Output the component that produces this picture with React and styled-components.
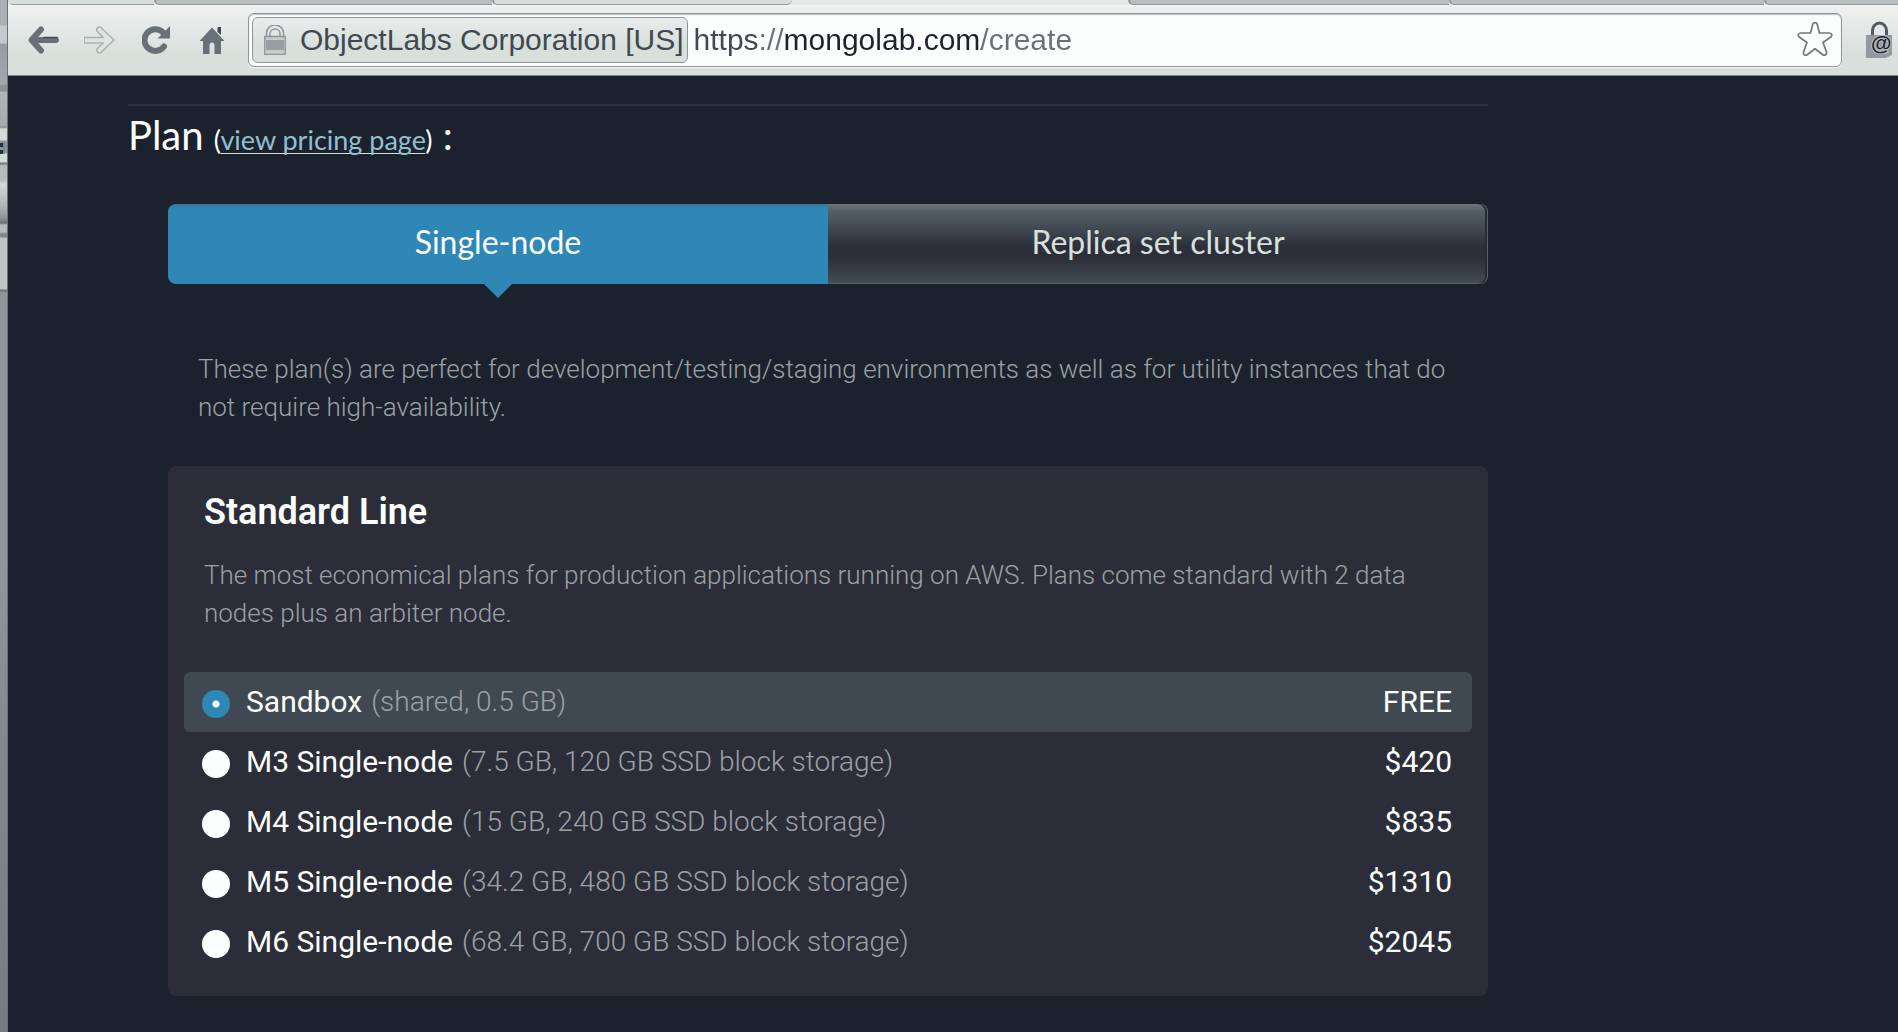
import React, { useState } from "react";
import styled, { createGlobalStyle, css } from "styled-components";

const c = {
  page: "#1b222d",
  card: "#2b2e39",
  selected: "#404951",
  blue: "#2f87b5",
  white: "#fbfefd",
  pale: "#d8e0dc",
  muted: "#9ba1a5",
  icon: "#687178",
  ink: "#404951",
};

const GlobalStyle = createGlobalStyle`
  *, *::before, *::after { box-sizing: border-box; }
  html, body { margin: 0; background: ${c.page}; }
  button, input { font: inherit; color: inherit; margin: 0; }
  h2, h3, p { margin: 0; }
`;

const Desktop = styled.div`
  display: flex;
  min-height: 100vh;
  overflow: hidden;
  font-family: Roboto, "Liberation Sans", sans-serif;
`;

const WindowBehind = styled.div`
  flex: 0 0 8px;
  border-right: 1px solid #687178;
  background: linear-gradient(
    #a9b0b2 0, #a9b0b2 25px, #c3cbc9 26px, #c3cbc9 43px,
    #969da2 44px, #a2a9ac 84px, #8a9196 86px, #8a9196 91px,
    #afb6b7 92px, #a5acaf 126px, #7f878c 127px, #d3dbd7 129px,
    #d3dbd7 140px, #8f979d 141px, #8f979d 153px, #d3dbd7 154px,
    #d3dbd7 162px, #687178 163px, #b5bdbc 166px, #b5bdbc 180px,
    #d0d8d4 184px, #b0b7b8 205px, #8f979d 218px, #687178 223px,
    #b5bdbc 225px, #b5bdbc 232px, #7f878c 234px, #7f878c 237px,
    #bdc5c3 238px, #bdc5c3 289px, #687178 290px, #8f979d 293px,
    #8f979d 560px, #80888d 760px, #757d82 100%
  );
`;

const BehindGlyph = styled.svg`
  display: block;
  margin-top: 141px;
`;

const Browser = styled.div`
  flex: 1;
  min-width: 0;
  display: flex;
  flex-direction: column;
`;

const TabStrip = styled.div`
  display: flex;
  height: 5px;
  background: #e4e9e7;
`;

const StripTab = styled.div`
  flex: ${(p) => (p.$grow ? "1 1 0" : `0 1 ${p.$width}px`)};
  ${(p) =>
    !p.$active &&
    css`
      background: ${p.$light ? "#d8e0dc" : "#b8bfbf"};
      border-bottom: 1px solid #8f979d;
      border-left: 2px solid ${p.$first ? "transparent" : "#8f979d"};
      border-radius: 0 0 ${p.$last ? "6px" : "0"} 6px;
    `}
`;

const Toolbar = styled.div`
  display: flex;
  align-items: center;
  padding: 7px 4px 9px 8px;
  border-top: 1px solid #f4f7f6;
  border-bottom: 1px solid #7c8588;
  background: linear-gradient(#edf1ef, #d8e0dc 70%);
  height: 71px;
`;

const NavButton = styled.button`
  display: grid;
  place-items: center;
  width: 56px;
  height: 48px;
  padding: 0;
  border: 0;
  background: none;
`;

const Omnibox = styled.div`
  flex: 1;
  min-width: 0;
  display: flex;
  align-items: center;
  height: 54px;
  margin: 0 24px 0 8px;
  padding: 0 8px 0 3px;
  border: 1px solid #8f979d;
  border-radius: 6px;
  background: ${c.white};
  box-shadow: inset 0 1px 1px #b8bfbf, 0 1px 0 #f6f9f8;
  font: 30px/36px "Liberation Sans", Arial, sans-serif;
`;

const SiteBadge = styled.button`
  display: flex;
  align-items: center;
  gap: 14px;
  height: 46px;
  padding: 0 3px 0 11px;
  border: 1px solid #8f979d;
  border-radius: 6px;
  background: linear-gradient(#e8edeb, #d8e0dc 60%);
  color: ${c.ink};
  white-space: nowrap;
`;

const UrlInput = styled.input`
  flex: 1;
  min-width: 0;
  height: 44px;
  padding: 0 0 0 6px;
  border: 0;
  outline: 0;
  color: transparent;
  caret-color: ${c.page};
  background: linear-gradient(
    90deg,
    ${c.ink} 71px,
    ${c.icon} 71px, ${c.icon} 96px,
    ${c.page} 96px, ${c.page} 293px,
    ${c.icon} 293px
  );
  -webkit-background-clip: text;
  background-clip: text;
`;

const IconButton = styled.button`
  display: grid;
  place-items: center;
  flex: none;
  padding: 0;
  border: 0;
  background: none;
`;

const Page = styled.main`
  flex: 1;
  padding: 28px 0 36px 120px;
  background: ${c.page};
`;

const Section = styled.section`
  max-width: 1360px;
  padding-top: 4px;
  border-top: 2px solid ${c.card};
`;

const PlanHeading = styled.h2`
  margin-bottom: 44px;
  color: ${c.white};
  font: 400 40px/50px Lato, "Open Sans", sans-serif;
`;

const Aside = styled.span`
  font-size: 27px;
  line-height: 32px;
`;

const PricingLink = styled.a`
  color: #92bfd2;
  text-decoration: underline;
  text-decoration-color: ${c.pale};
  text-decoration-thickness: 1px;
  text-underline-offset: 3px;
  text-decoration-skip-ink: none;
`;

const PlanBody = styled.div`
  margin-left: 40px;
`;

const Switcher = styled.div`
  display: grid;
  grid-template-columns: 1fr 1fr;
  margin-bottom: 66px;
`;

const SwitchTab = styled.button`
  position: relative;
  height: 80px;
  padding: 0 0 4px;
  border: 0;
  font: 400 32px/40px Lato, "Open Sans", sans-serif;
  ${(p) =>
    p.$active
      ? css`
          color: ${c.white};
          background: linear-gradient(#397796, ${c.blue} 5px);
          &::after {
            content: "";
            position: absolute;
            top: 100%;
            left: 50%;
            margin-left: -14px;
            border: 14px solid transparent;
            border-top-color: ${c.blue};
            border-bottom: 0;
          }
        `
      : css`
          color: ${c.pale};
          background: linear-gradient(
            #6b7479, #565f65 7px, #434c54 22px, #3c424b 30px,
            #2c2f3a 42px, #2c2f3a 54px, #3c434c 72px, #414a52 78px, #596268 80px
          );
        `}
  &:first-child { border-radius: 8px 0 0 8px; }
  &:last-child {
    border-radius: 0 8px 8px 0;
    box-shadow: inset -1px 0 0 #596268, inset -3px 0 0 #262a35;
  }
`;

const Description = styled.p`
  color: ${c.muted};
  font-size: 26px;
  font-weight: 300;
  line-height: 38px;
`;

const Intro = styled(Description)`
  margin-bottom: 40px;
  padding: 0 30px;
`;

const Card = styled.div`
  padding: 26px 16px 24px;
  border-radius: 8px;
  background: ${c.card};
`;

const CardHeader = styled.div`
  display: grid;
  gap: 24px;
  margin-bottom: 40px;
  padding: 0 20px;
`;

const CardTitle = styled.h3`
  color: ${c.white};
  font-size: 36px;
  font-weight: 600;
  line-height: 40px;
`;

const PlanRow = styled.label`
  display: flex;
  align-items: center;
  height: 60px;
  padding: 0 20px 0 18px;
  border-radius: 6px;
  background: ${(p) => (p.$selected ? c.selected : "transparent")};
  color: ${c.white};
  font-size: 30px;
  line-height: 36px;
`;

const Radio = styled.input`
  appearance: none;
  flex: none;
  width: 28px;
  height: 28px;
  margin: 4px 16px 0 0;
  border-radius: 50%;
  background: ${c.white};
  &:checked {
    background: radial-gradient(circle, ${c.white} 3px, ${c.blue} 4px);
  }
`;

const PlanName = styled.span`
  margin-right: 9px;
`;

const PlanSpec = styled.span`
  flex: 1;
  color: ${c.muted};
  font-size: 28px;
  font-weight: 300;
`;

const Price = styled.span``;

const BackIcon = () => (
  <svg width="32" height="28" viewBox="0 0 32 28" fill="none" stroke={c.icon} strokeWidth="6" strokeLinecap="round">
    <path d="M28 14H7" />
    <path d="M13 3.500 3.500 14l9.500 10.500" strokeLinejoin="round" />
    <path d="M16 11.500h13" stroke="#404951" strokeWidth="1.500" />
  </svg>
);

const ForwardIcon = () => (
  <svg width="32" height="28" viewBox="0 0 32 28">
    <path
      d="M1 11.500h18l-6-6.500c-1.500-3 2-5 4-3.500L30 14 17 26.500c-2 1.500-5-.500-4-3.500l6-6H1c-1.500 0-1.500-5.500 0-5.500z"
      fill="#dde4e1" stroke="#aab1b3" strokeWidth="1.500"
    />
  </svg>
);

const ReloadIcon = () => (
  <svg width="28" height="28" viewBox="0 0 28 28" fill="none">
    <path d="M22 20.500A10.800 10.800 0 1 1 21 6.500" stroke={c.icon} strokeWidth="6" strokeLinecap="round" />
    <path d="M28 0v12.500H15.500z" fill={c.icon} />
  </svg>
);

const HomeIcon = () => (
  <svg width="26" height="28" viewBox="0 0 26 28">
    <path d="M18.500 1H22v8l-3.500-3z" fill="#404951" />
    <path d="M13 1.500 25.500 15H22v13h-6.500v-9c0-3.500-5-3.500-5 0v9H4V15H.500z" fill={c.icon} />
  </svg>
);

const LockIcon = () => (
  <svg width="22" height="30" viewBox="0 0 22 30" fill="none" stroke="#8f979d">
    <path d="M2.500 11.500V8a8 7.500 0 0 1 17 0v3.500M6 11.500V8.500a5 4.500 0 0 1 10 0v3" strokeWidth="1.500" />
    <path d="M.700 11.500h20.600v17.800H.700z" fill="#c5ccca" strokeWidth="1.300" />
    <path d="M2 15h18v10H2z" fill="#989fa4" stroke="none" />
  </svg>
);

const StarIcon = () => (
  <svg width="36" height="36" viewBox="0 1 36 36" fill="#fbfefd" stroke="#6f787d" strokeWidth="1.700" strokeLinejoin="round">
    <path d="M15.800 3.200c.700-2.200 3.700-2.200 4.400 0L22.500 12h10c2.300.200 3 2.500 1.300 4L26 21.500l3.500 9.500c.500 2.500-1.700 4-3.700 2.700L18 27.800l-7.800 5.900c-2 1.300-4.200-.200-3.700-2.700l3.500-9.500L2.200 16C.500 14.500 1.200 12.200 3.500 12h10z" />
  </svg>
);

const MailLockIcon = () => (
  <svg width="28" height="38" viewBox="0 0 28 38">
    <path d="M6.500 15V9.500a7 7.500 0 0 1 14 0V15" fill="none" stroke="#525b61" strokeWidth="3" />
    <path d="M0 14h26v20l-6 3H0z" fill="#9299a0" />
    <text x="5" y="29" fontFamily="Liberation Sans, sans-serif" fontSize="21" fontWeight="700" fill={c.page} stroke="#b8bfbf" strokeWidth="2" paintOrder="stroke">@</text>
  </svg>
);

const PLANS = [
  { id: "sandbox", name: "Sandbox", spec: "(shared, 0.5 GB)", price: "FREE" },
  { id: "m3", name: "M3 Single-node", spec: "(7.5 GB, 120 GB SSD block storage)", price: "$420" },
  { id: "m4", name: "M4 Single-node", spec: "(15 GB, 240 GB SSD block storage)", price: "$835" },
  { id: "m5", name: "M5 Single-node", spec: "(34.2 GB, 480 GB SSD block storage)", price: "$1310" },
  { id: "m6", name: "M6 Single-node", spec: "(68.4 GB, 700 GB SSD block storage)", price: "$2045" },
];

export default function App() {
  const [plan, setPlan] = useState("sandbox");
  const [cluster, setCluster] = useState(false);

  return (
    <Desktop>
      <GlobalStyle />
      <WindowBehind>
        <BehindGlyph width="7" height="14" viewBox="0 0 7 14">
          <path d="M0 2h3v4H0zM0 9h3v4H0z" fill="#2b2e39" />
          <path d="M4 1v12" stroke="#4d8296" />
        </BehindGlyph>
      </WindowBehind>
      <Browser>
        <TabStrip>
          <StripTab $width={146} $light $first />
          <StripTab $width={338} />
          <StripTab $width={300} $light $last />
          <StripTab $width={336} $active />
          <StripTab $width={321} />
          <StripTab $width={315} />
          <StripTab $grow />
        </TabStrip>
        <Toolbar>
          <NavButton aria-label="Back"><BackIcon /></NavButton>
          <NavButton aria-label="Forward"><ForwardIcon /></NavButton>
          <NavButton aria-label="Reload"><ReloadIcon /></NavButton>
          <NavButton aria-label="Home"><HomeIcon /></NavButton>
          <Omnibox>
            <SiteBadge>
              <LockIcon />
              ObjectLabs Corporation [US]
            </SiteBadge>
            <UrlInput aria-label="Address" defaultValue="https://mongolab.com/create" />
            <IconButton aria-label="Bookmark"><StarIcon /></IconButton>
          </Omnibox>
          <IconButton aria-label="Mail lock"><MailLockIcon /></IconButton>
        </Toolbar>
        <Page>
          <Section>
            <PlanHeading>
              Plan <Aside>(<PricingLink href="#pricing">view pricing page</PricingLink>)</Aside> :
            </PlanHeading>
            <PlanBody>
              <Switcher>
                <SwitchTab $active={!cluster} onClick={() => setCluster(false)}>Single-node</SwitchTab>
                <SwitchTab $active={cluster} onClick={() => setCluster(true)}>Replica set cluster</SwitchTab>
              </Switcher>
              <Intro>
                These plan(s) are perfect for development/testing/staging environments as well as for
                utility instances that do not require high-availability.
              </Intro>
              <Card>
                <CardHeader>
                  <CardTitle>Standard Line</CardTitle>
                  <Description>
                    The most economical plans for production applications running on AWS. Plans come
                    standard with 2 data nodes plus an arbiter node.
                  </Description>
                </CardHeader>
                {PLANS.map((p) => (
                  <PlanRow key={p.id} htmlFor={p.id} $selected={plan === p.id}>
                    <Radio type="radio" name="plan" id={p.id} checked={plan === p.id} onChange={() => setPlan(p.id)} />
                    <PlanName>{p.name}</PlanName>
                    <PlanSpec>{p.spec}</PlanSpec>
                    <Price>{p.price}</Price>
                  </PlanRow>
                ))}
              </Card>
            </PlanBody>
          </Section>
        </Page>
      </Browser>
    </Desktop>
  );
}
